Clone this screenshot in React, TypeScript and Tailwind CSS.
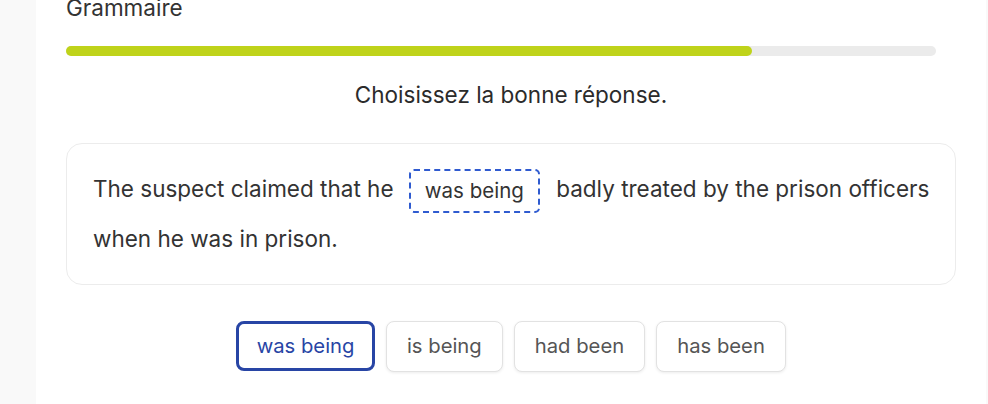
import React from "react";

const options = ["was being", "is being", "had been", "has been"];

export default function App() {
  return (
    <div
      className="flex h-[404px] w-[988px] overflow-hidden bg-white"
      style={{ fontFamily: "Inter, 'Noto Sans', sans-serif" }}
    >
      <div className="w-[36px] shrink-0 bg-[#f9f9f9]" />
      <div className="flex w-[950px] shrink-0 flex-col px-[30px]">
        <div className="mt-[-6px] text-[22.5px] leading-[28px] text-[#333]">Grammaire</div>
        <div className="mt-[24px] mr-[20px] h-[10px] rounded-full bg-[#ebebeb]">
          <div className="h-full w-[78.9%] rounded-full bg-[#bfd31a]" />
        </div>
        <div className="mt-[25px] text-center text-[22.5px] leading-[28px] text-[#2b2b2b]">
          Choisissez la bonne réponse.
        </div>
        <div className="mt-[34px] rounded-[16px] border border-[#ececec] pl-[26px] pr-[16px] py-[20px] text-[22.5px] leading-[50px] text-[#333]">
          The suspect claimed that he{" "}
          <span className="ml-[9px] mr-[10px] inline-flex h-[44px] items-center rounded-[5px] border-2 border-dashed border-[#2f5bd0] px-[14px] align-middle text-[20.5px] leading-[24px] text-[#333]">
            was being
          </span>{" "}
          badly treated by the prison officers when he was in prison.
        </div>
        <div className="mt-[36px] flex justify-center gap-[11px]">
          {options.map((o, i) =>
            i === 0 ? (
              <button
                key={o}
                className="h-[50px] rounded-[8px] border-[3px] border-[#2845a5] bg-white px-[17.5px] text-[20.25px] text-[#2845a5]"
              >
                {o}
              </button>
            ) : (
              <button
                key={o}
                className="h-[51px] rounded-[8px] border border-[#e2e2e2] bg-white px-[20px] text-[20.25px] text-[#555] shadow-[0_1px_3px_rgba(0,0,0,0.08)]"
              >
                {o}
              </button>
            )
          )}
        </div>
      </div>
      <div className="flex-1 bg-[#f9f9f9]" />
    </div>
  );
}
